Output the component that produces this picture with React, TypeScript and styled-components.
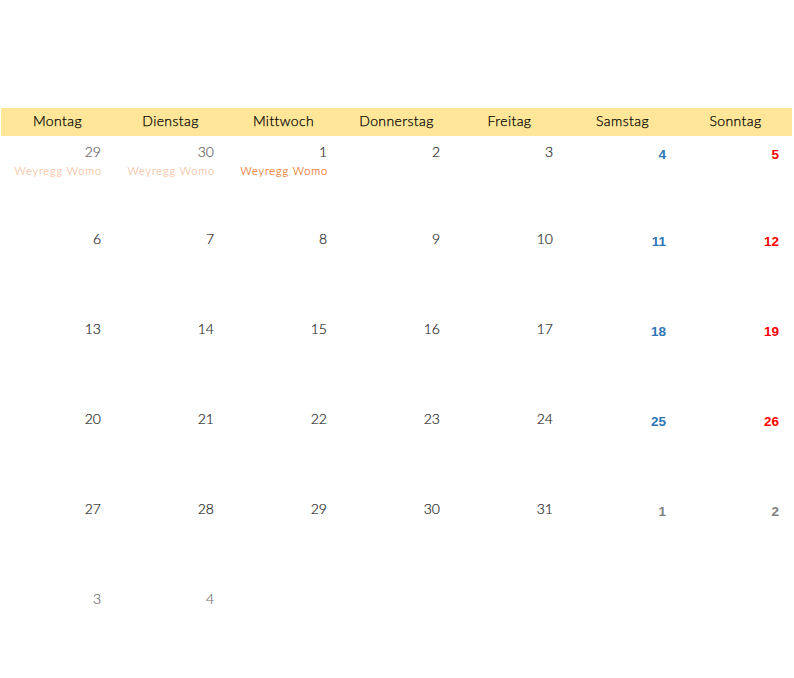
import React from "react";
import styled, { createGlobalStyle } from "styled-components";

const Global = createGlobalStyle`
  html, body { margin: 0; padding: 0; background: #ffffff; }
  body { font-family: "Lato", "Open Sans", sans-serif; }
`;

const Page = styled.div`
  width: 794px;
  height: 678px;
  padding: 108px 2px 0 1px;
  box-sizing: border-box;
  overflow: hidden;
`;

const HeaderRow = styled.div`
  display: grid;
  grid-template-columns: repeat(7, 113px);
  height: 28px;
  padding-bottom: 3px;
  box-sizing: border-box;
  background: #ffe699;
  align-items: center;
`;

const HeaderCell = styled.div`
  text-align: center;
  font-size: 14px;
  font-weight: 300;
  color: #000000;
  letter-spacing: 0.4px;
  -webkit-text-stroke: 0.25px #000000;
`;

const WeekRow = styled.div<{ $h: number }>`
  display: grid;
  grid-template-columns: repeat(7, 113px);
  height: ${(p) => p.$h}px;
`;

const DayCell = styled.div`
  display: flex;
  flex-direction: column;
  align-items: flex-end;
  padding: 7px 13px 0 0;
  box-sizing: border-box;
`;

type Kind = "normal" | "other" | "sat" | "sun" | "otherWeekend" | "faint";

const colors: Record<Kind, string> = {
  normal: "#1f1f1f",
  other: "#5f5f5f",
  sat: "#2e75b6",
  sun: "#ff0000",
  otherWeekend: "#7f7f7f",
  faint: "#707070",
};

const DayNum = styled.div<{ $kind: Kind }>`
  font-size: 14px;
  font-weight: 300;
  line-height: 18px;
  color: ${(p) => colors[p.$kind]};
  -webkit-text-stroke: 0.2px ${(p) => colors[p.$kind]};
  ${(p) =>
    p.$kind === "sat" || p.$kind === "sun" || p.$kind === "otherWeekend"
      ? `font-family: "Liberation Sans", Arial, sans-serif; font-weight: bold; font-size: 13.5px; padding-top: 4px; line-height: 16px; -webkit-text-stroke: 0;`
      : ""}
`;

const Event = styled.div<{ $faded?: boolean }>`
  font-size: 11px;
  font-weight: 300;
  line-height: 14px;
  margin-top: 3px;
  margin-right: -1px;
  letter-spacing: 0.9px;
  color: ${(p) => (p.$faded ? "#f6c4a3" : "#ea7428")};
  -webkit-text-stroke: 0.2px ${(p) => (p.$faded ? "#f6c4a3" : "#ea7428")};
  white-space: nowrap;
`;

const days = ["Montag", "Dienstag", "Mittwoch", "Donnerstag", "Freitag", "Samstag", "Sonntag"];

type Cell = { n?: number; kind?: Kind; event?: { faded?: boolean } };

const weeks: { h: number; cells: Cell[] }[] = [
  {
    h: 87,
    cells: [
      { n: 29, kind: "other", event: { faded: true } },
      { n: 30, kind: "other", event: { faded: true } },
      { n: 1, kind: "normal", event: {} },
      { n: 2, kind: "normal" },
      { n: 3, kind: "normal" },
      { n: 4, kind: "sat" },
      { n: 5, kind: "sun" },
    ],
  },
  ...[6, 13, 20].map((s) => ({
    h: 90,
    cells: [0, 1, 2, 3, 4, 5, 6].map((i) => ({
      n: s + i,
      kind: (i === 5 ? "sat" : i === 6 ? "sun" : "normal") as Kind,
    })),
  })),
  {
    h: 90,
    cells: [
      { n: 27, kind: "normal" },
      { n: 28, kind: "normal" },
      { n: 29, kind: "normal" },
      { n: 30, kind: "normal" },
      { n: 31, kind: "normal" },
      { n: 1, kind: "otherWeekend" },
      { n: 2, kind: "otherWeekend" },
    ],
  },
  {
    h: 90,
    cells: [{ n: 3, kind: "faint" }, { n: 4, kind: "faint" }, {}, {}, {}, {}, {}],
  },
];

export default function App() {
  return (
    <Page>
      <Global />
      <HeaderRow>
        {days.map((d) => (
          <HeaderCell key={d}>{d}</HeaderCell>
        ))}
      </HeaderRow>
      {weeks.map((w, wi) => (
        <WeekRow key={wi} $h={w.h}>
          {w.cells.map((c, ci) => (
            <DayCell key={ci}>
              {c.n !== undefined && <DayNum $kind={c.kind || "normal"}>{c.n}</DayNum>}
              {c.event && <Event $faded={c.event.faded}>Weyregg Womo</Event>}
            </DayCell>
          ))}
        </WeekRow>
      ))}
    </Page>
  );
}
